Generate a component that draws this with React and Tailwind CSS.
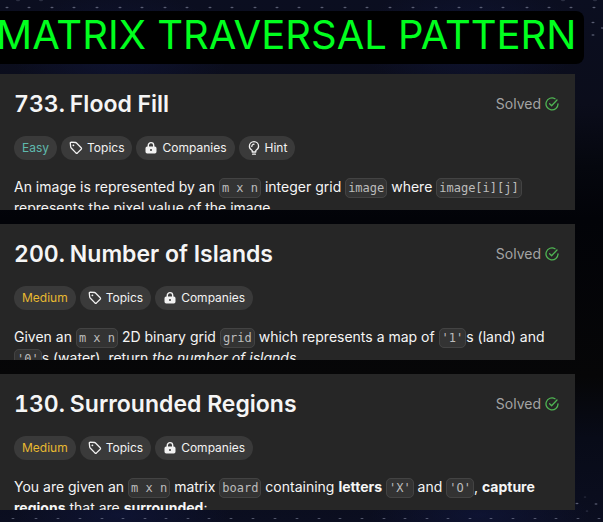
const SANS = "font-['Inter','Liberation_Sans',sans-serif]";

function Backdrop() {
  const top = [7, 29, 52, 74, 97, 120, 142, 165, 187, 210, 232, 255, 277, 299, 322, 345, 367, 390, 413, 436, 459, 481, 503, 527, 549, 571, 594];
  const bottom = [13, 36, 58, 80, 102, 123, 145, 166, 188, 209, 231, 253, 275, 297, 319, 340, 362, 384, 405, 427, 448, 470, 491, 513, 535, 556, 578, 599];
  return (
    <svg className="absolute inset-0 -z-10 h-full w-full" viewBox="0 0 603 522" preserveAspectRatio="none" aria-hidden="true">
      <defs>
        <linearGradient id="night" x1="0" y1="0" x2="0" y2="1">
          <stop offset="0" stopColor="#0b0e20" />
          <stop offset="0.2" stopColor="#0b0d1b" />
          <stop offset="0.32" stopColor="#05070e" />
          <stop offset="0.42" stopColor="#020308" />
          <stop offset="0.72" stopColor="#060607" />
          <stop offset="0.84" stopColor="#080b18" />
          <stop offset="1" stopColor="#0b0e20" />
        </linearGradient>
        <radialGradient id="glow">
          <stop offset="0" stopColor="#10163a" stopOpacity="0.7" />
          <stop offset="1" stopColor="#10163a" stopOpacity="0" />
        </radialGradient>
      </defs>
      <rect width="603" height="522" fill="url(#night)" />
      <ellipse cx="120" cy="50" rx="110" ry="60" fill="url(#glow)" />
      <ellipse cx="470" cy="40" rx="110" ry="60" fill="url(#glow)" />
      <ellipse cx="120" cy="515" rx="110" ry="30" fill="url(#glow)" />
      <ellipse cx="480" cy="515" rx="110" ry="30" fill="url(#glow)" />
      <g fill="#8b90a8" opacity="0.6">
        {top.map((x) => <ellipse key={x} cx={x} cy="7.500" rx="1.6" ry="0.7" />)}
        {bottom.map((x) => <ellipse key={x} cx={x} cy="518.5" rx="1.6" ry="0.6" />)}
        <ellipse cx="593" cy="22.500" rx="1.600" ry="0.7" />
        <ellipse cx="593" cy="35" rx="1.600" ry="0.7" />
        <ellipse cx="602" cy="28" rx="1.200" ry="0.7" />
        <ellipse cx="577" cy="503.500" rx="1.500" ry="0.7" />
        <ellipse cx="596" cy="504" rx="1.500" ry="0.7" />
        <ellipse cx="585" cy="497" rx="1.300" ry="0.6" opacity="0.5" />
        <ellipse cx="587" cy="511" rx="1.300" ry="0.6" opacity="0.6" />
      </g>
      <g fill="#8b90a8" opacity="0.25">
        <ellipse cx="18" cy="0.500" rx="2" ry="0.8" />
        <ellipse cx="41" cy="0.500" rx="2" ry="0.8" />
        <ellipse cx="563" cy="0.500" rx="2" ry="0.8" />
        <ellipse cx="595" cy="0.500" rx="2" ry="0.8" />
      </g>
    </svg>
  );
}

function SolvedIcon() {
  return (
    <svg className="size-[14px] text-[#4fb553]" viewBox="0 0 14 14" fill="none" stroke="currentColor" strokeWidth="1.3" strokeLinecap="round" strokeLinejoin="round" aria-hidden="true">
      <path d="M10 1.700A6 6 0 1 0 13 6.800" />
      <path d="M4.600 6.700L6.600 8.700L12 3" />
    </svg>
  );
}

function TagIcon() {
  return (
    <svg className="size-[14px]" viewBox="0 0 14 14" fill="none" stroke="currentColor" strokeWidth="1.3" strokeLinejoin="round" aria-hidden="true">
      <path d="M1.300 2.300L1.700 6Q1.800 6.600 2.200 7L6.900 11.900Q7.700 12.600 8.500 11.900L12.200 8.300Q12.900 7.500 12.200 6.700L7.500 2Q7.100 1.600 6.500 1.500L2.300 1.200Q1.200 1.200 1.300 2.300Z" />
      <circle cx="4.400" cy="4.300" r="0.9" fill="currentColor" stroke="none" />
    </svg>
  );
}

function LockIcon() {
  return (
    <svg className="size-[14px]" viewBox="0 0 14 14" aria-hidden="true">
      <path d="M4.300 6V4.300a2.700 2.700 0 0 1 5.400 0V6" fill="none" stroke="currentColor" strokeWidth="1.4" />
      <path fillRule="evenodd" fill="currentColor" d="M3.200 5.600h7.600a1.700 1.700 0 0 1 1.700 1.700v3.500a1.700 1.700 0 0 1-1.700 1.700H3.200a1.700 1.700 0 0 1-1.700-1.700V7.300a1.700 1.700 0 0 1 1.700-1.700ZM7 8a1 1 0 1 0 0 2a1 1 0 1 0 0-2Z" />
    </svg>
  );
}

function HintIcon() {
  return (
    <svg className="size-[14px]" viewBox="0 0 14 14" fill="none" stroke="currentColor" strokeWidth="1.3" strokeLinecap="round" strokeLinejoin="round" aria-hidden="true">
      <path d="M5.200 11V9.500C3.500 8.600 2.400 7.200 2.400 5.300a4.600 4.600 0 0 1 9.200 0C11.600 7.200 10.500 8.600 8.800 9.500V11Z" />
      <path d="M4.800 5.400A2.200 2.200 0 0 1 7 3.200" />
      <path d="M5.600 13.200H8.400" />
    </svg>
  );
}

function Chip({ icon, children }) {
  return (
    <button type="button" className="flex h-6 items-center gap-1 rounded-full bg-[#3a3a3a] px-2 text-xs text-[#f2f2f2]">
      {icon}
      {children}
    </button>
  );
}

function Code({ children }) {
  return (
    <code className="rounded-[5px] border border-[#434343] bg-[#333333] px-0.5 py-[2px] font-['DejaVu_Sans_Mono',monospace] text-xs text-[#bcbcbc]">
      {children}
    </code>
  );
}

function Problem({ number, title, level, hint, children }) {
  return (
    <article className="h-[136px] overflow-hidden bg-[#262626] px-3.5 pt-4">
      <header className="flex items-center justify-between pr-0.5">
        <h2 className="flex gap-[5px] text-[23px] leading-7 font-semibold text-[#f5f5f5]">
          <span className="tabular-nums">{number}.</span>
          <span>{title}</span>
        </h2>
        <span className="flex items-center gap-1 text-sm text-[#a3a3a3]">
          Solved
          <SolvedIcon />
        </span>
      </header>
      <div className="mt-[18px] flex gap-1">
        <span className={`flex h-6 items-center rounded-full bg-[#3a3a3a] px-2 text-xs ${level === "Easy" ? "text-[#5fb9ad]" : "text-[#e8b931]"}`}>
          {level}
        </span>
        <Chip icon={<TagIcon />}>Topics</Chip>
        <Chip icon={<LockIcon />}>Companies</Chip>
        {hint && <Chip icon={<HintIcon />}>Hint</Chip>}
      </div>
      <p className="mt-4 text-sm leading-[21px] text-[#f5f5f5]">{children}</p>
    </article>
  );
}

export default function App() {
  return (
    <main className={`relative isolate min-h-screen overflow-hidden pt-[11px] pb-3 ${SANS}`}>
      <Backdrop />
      <h1 className="mr-[19px] rounded-r-lg bg-black pb-[5px] text-[40px] leading-[48px] whitespace-nowrap text-[#00ff1e]">
        <span className="-ml-1">MATRIX TRAVERSAL PATTERN</span>
      </h1>
      <div className="mt-2.5 mr-7 flex flex-col gap-3.5">
        <Problem number={733} title="Flood Fill" level="Easy" hint>
          An image is represented by an <Code>m x n</Code> integer grid <Code>image</Code> where <Code>image[i][j]</Code> represents the pixel value of the image.
        </Problem>
        <Problem number={200} title="Number of Islands" level="Medium">
          Given an <Code>m x n</Code> 2D binary grid <Code>grid</Code> which represents a map of <Code>'1'</Code>s (land) and <Code>'0'</Code>s (water), return <em>the number of islands</em>.
        </Problem>
        <Problem number={130} title="Surrounded Regions" level="Medium">
          You are given an <Code>m x n</Code> matrix <Code>board</Code> containing <strong>letters</strong> <Code>'X'</Code> and <Code>'O'</Code>, <strong>capture regions</strong> that are <strong>surrounded</strong>:
        </Problem>
      </div>
    </main>
  );
}
